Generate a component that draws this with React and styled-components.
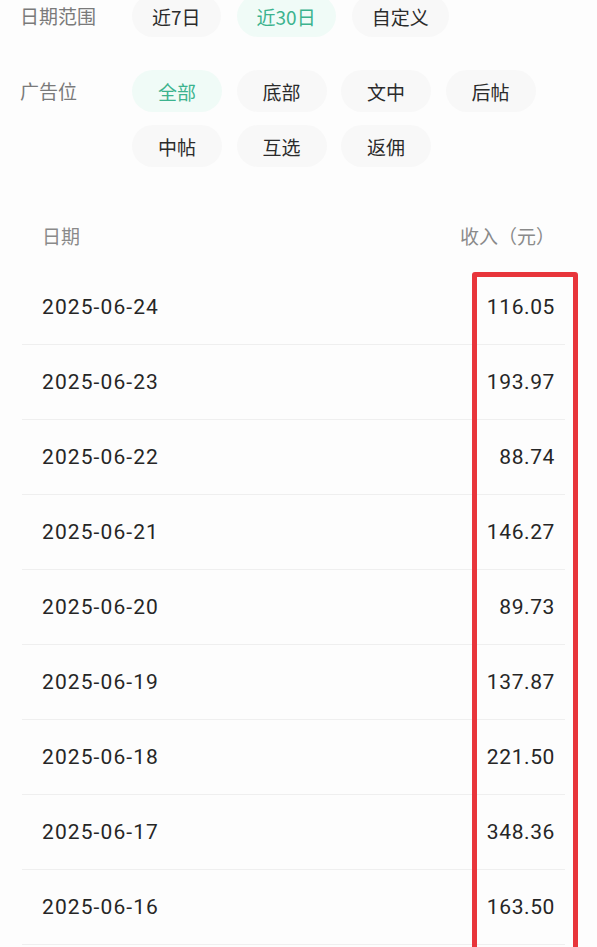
import React from "react";
import styled, { createGlobalStyle } from "styled-components";

const GlobalStyle = createGlobalStyle`
  html, body {
    margin: 0;
    padding: 0;
    background: #fdfdfd;
    overflow: hidden;
  }
  body {
    font-family: "Noto Sans CJK SC", "Noto Sans", sans-serif;
  }
`;

const Page = styled.div`
  width: 597px;
  height: 947px;
  overflow: hidden;
  background: #fdfdfd;
`;

const Filters = styled.div`
  display: flex;
  flex-direction: column;
  gap: 33px;
  padding-left: 20px;
  margin-top: -5px;
`;

const FilterGroup = styled.div`
  display: grid;
  grid-template-columns: 112px 1fr;
  align-items: start;
`;

const Label = styled.div`
  height: 42px;
  line-height: 42px;
  font-size: 19px;
  color: #7a7a7a;
  white-space: nowrap;
`;

const InlinePills = styled.div`
  display: flex;
  gap: 16px;
`;

const GridPills = styled.div`
  display: grid;
  grid-template-columns: repeat(4, 90px);
  column-gap: 14.5px;
  row-gap: 13px;
`;

const Pill = styled.div`
  height: 42px;
  border-radius: 21px;
  display: flex;
  align-items: center;
  justify-content: center;
  padding: ${(p) => (p.$fixed ? "0" : "0 20px")};
  font-size: 19px;
  white-space: nowrap;
  color: ${(p) => (p.$active ? "#3cb38e" : "#2b2b2b")};
  background: ${(p) => (p.$active ? "#f0fbf7" : "#f8f8f8")};
`;

const Table = styled.div`
  position: relative;
  margin: 33px 32px 0 22px;
`;

const HeaderRow = styled.div`
  height: 70px;
  display: flex;
  align-items: center;
  justify-content: space-between;
  padding: 0 10px 0 20px;
  font-size: 19px;
  color: #8a8a8a;
`;

const Row = styled.div`
  height: 74px;
  display: flex;
  align-items: center;
  justify-content: space-between;
  padding: 0 10px 0 20px;
  border-bottom: 1px solid #efefef;
  font-family: Roboto, "Noto Sans", sans-serif;
  font-size: 21px;
  color: #262626;
`;

const DateCell = styled.span`
  letter-spacing: 1.1px;
`;

const Amount = styled.span`
  letter-spacing: 0.6px;
`;

const Highlight = styled.div`
  position: absolute;
  left: 450px;
  top: 72px;
  width: 106px;
  height: 720px;
  box-sizing: border-box;
  border: 5px solid #e8353b;
  border-radius: 3px;
  pointer-events: none;
`;

const rangeOptions = [
  { label: "近7日" },
  { label: "近30日", active: true },
  { label: "自定义" },
];

const slotOptions = [
  { label: "全部", active: true },
  { label: "底部" },
  { label: "文中" },
  { label: "后帖" },
  { label: "中帖" },
  { label: "互选" },
  { label: "返佣" },
];

const rows = [
  ["2025-06-24", "116.05"],
  ["2025-06-23", "193.97"],
  ["2025-06-22", "88.74"],
  ["2025-06-21", "146.27"],
  ["2025-06-20", "89.73"],
  ["2025-06-19", "137.87"],
  ["2025-06-18", "221.50"],
  ["2025-06-17", "348.36"],
  ["2025-06-16", "163.50"],
];

export default function App() {
  return (
    <Page>
      <GlobalStyle />
      <Filters>
        <FilterGroup>
          <Label>日期范围</Label>
          <InlinePills>
            {rangeOptions.map((o) => (
              <Pill key={o.label} $active={o.active}>
                {o.label}
              </Pill>
            ))}
          </InlinePills>
        </FilterGroup>
        <FilterGroup>
          <Label>广告位</Label>
          <GridPills>
            {slotOptions.map((o) => (
              <Pill key={o.label} $fixed $active={o.active}>
                {o.label}
              </Pill>
            ))}
          </GridPills>
        </FilterGroup>
      </Filters>
      <Table>
        <HeaderRow>
          <span>日期</span>
          <span>收入（元）</span>
        </HeaderRow>
        {rows.map(([d, v]) => (
          <Row key={d}>
            <DateCell>{d}</DateCell>
            <Amount>{v}</Amount>
          </Row>
        ))}
        <Highlight />
      </Table>
    </Page>
  );
}
